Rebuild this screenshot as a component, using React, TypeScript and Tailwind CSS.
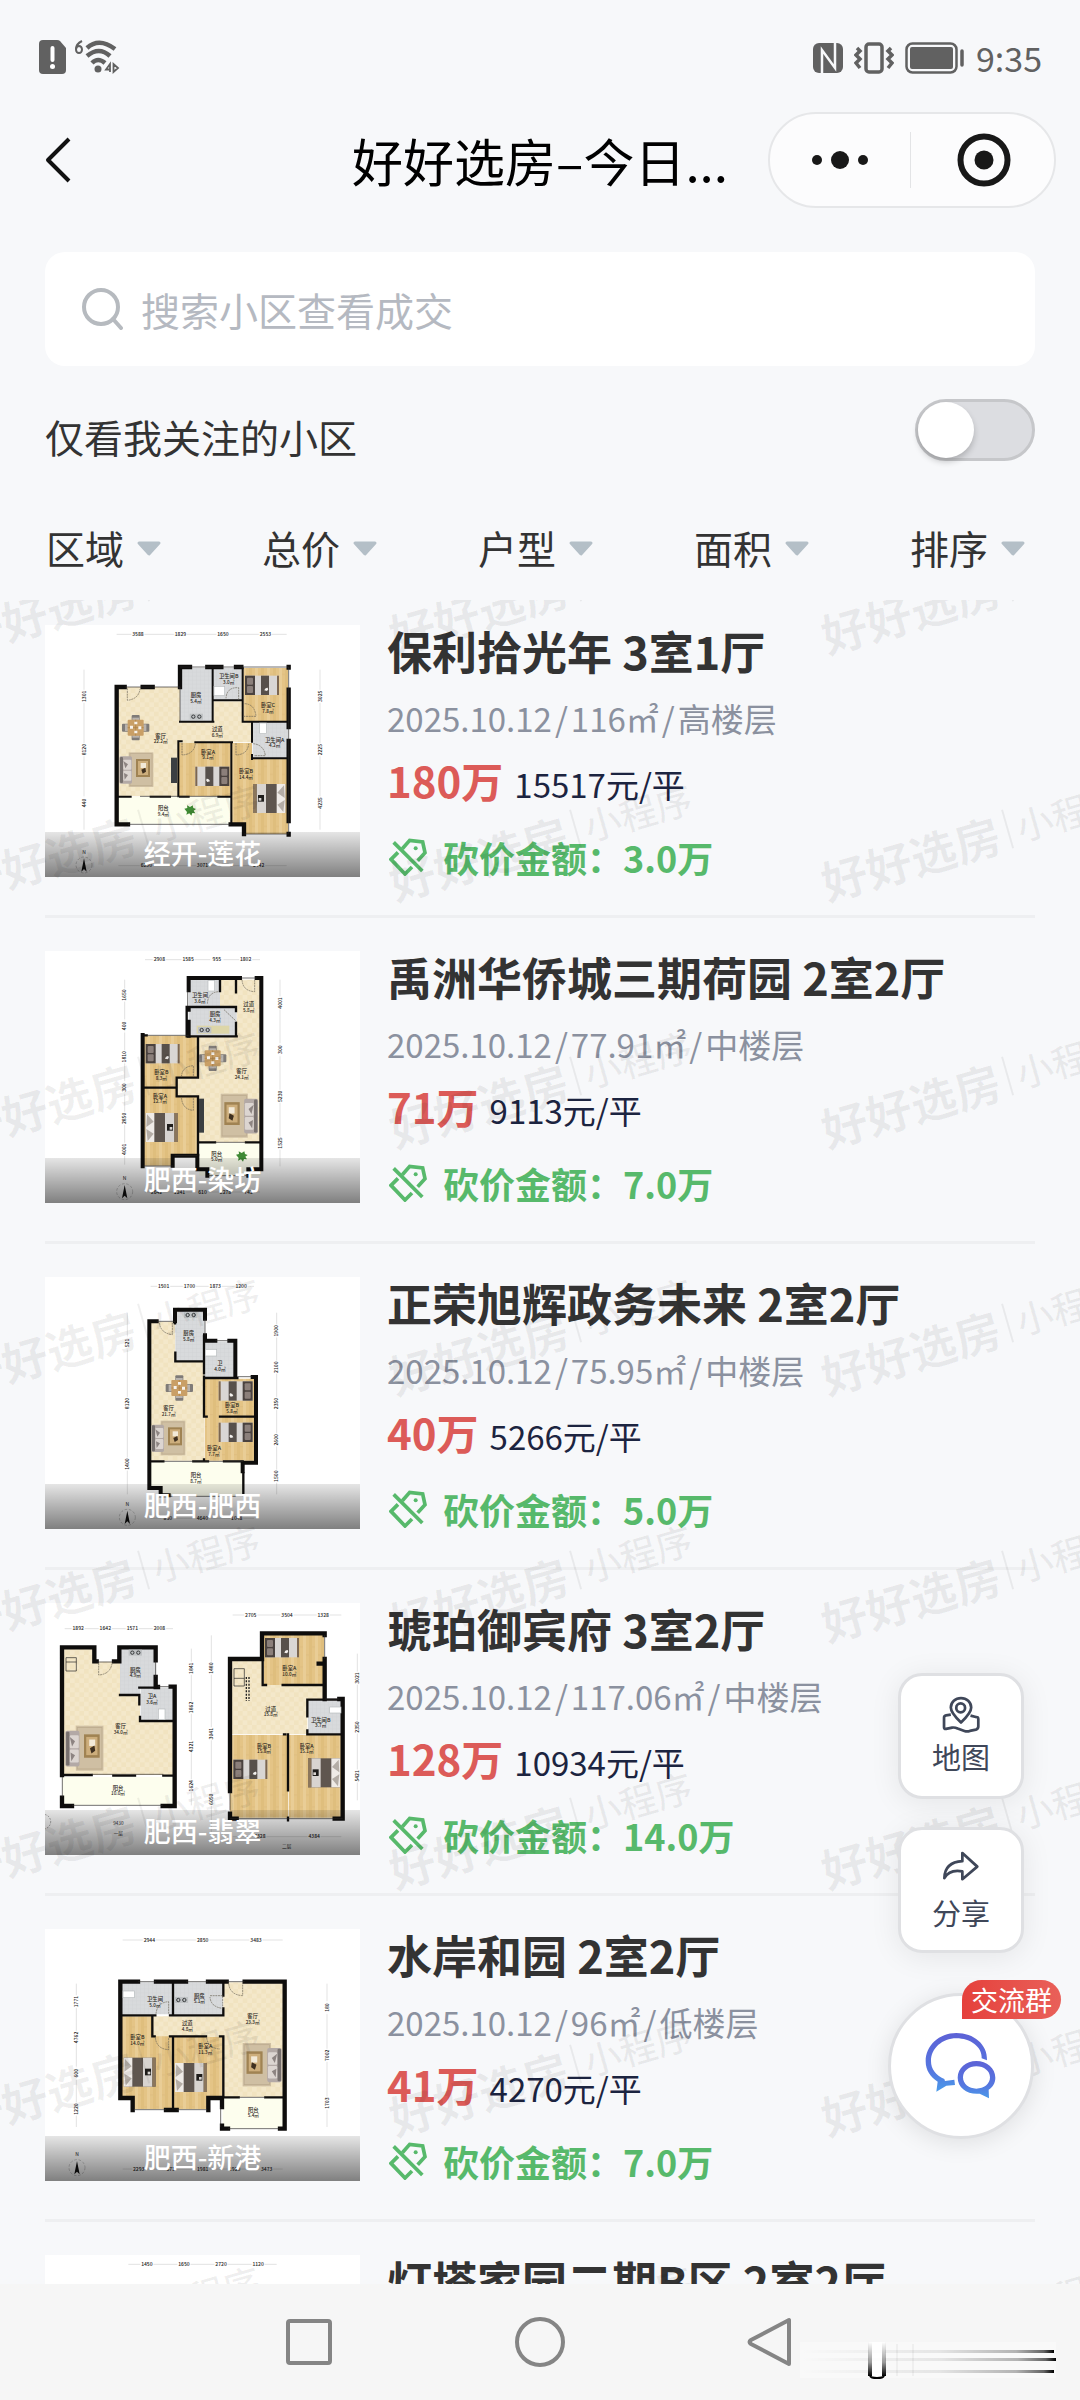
import { ReactNode, useState } from "react";

type Plan = { x: number; y: number; art: ReactNode };

const listings = [
  { name: "保利拾光年 3室1厅", date: "2025.10.12", area: "116㎡", floor: "高楼层", price: "180万", unit: "15517元/平", cut: "3.0万", place: "经开-莲花" },
  { name: "禹洲华侨城三期荷园 2室2厅", date: "2025.10.12", area: "77.91㎡", floor: "中楼层", price: "71万", unit: "9113元/平", cut: "7.0万", place: "肥西-染坊" },
  { name: "正荣旭辉政务未来 2室2厅", date: "2025.10.12", area: "75.95㎡", floor: "中楼层", price: "40万", unit: "5266元/平", cut: "5.0万", place: "肥西-肥西" },
  { name: "琥珀御宾府 3室2厅", date: "2025.10.12", area: "117.06㎡", floor: "中楼层", price: "128万", unit: "10934元/平", cut: "14.0万", place: "肥西-翡翠" },
  { name: "水岸和园 2室2厅", date: "2025.10.12", area: "96㎡", floor: "低楼层", price: "41万", unit: "4270元/平", cut: "7.0万", place: "肥西-新港" },
  { name: "灯塔家园二期B区 2室2厅", date: "2025.10.12", area: "89㎡", floor: "中楼层", price: "62万", unit: "6966元/平", cut: "4.0万", place: "肥西-桃花" },
];

const filters = ["区域", "总价", "户型", "面积", "排序"];

/* ---------- floor plan pieces ---------- */

const Floor = ({ d, kind }: { d: string; kind: "wood" | "cream" | "tile" | "deck" }) => (
  <path d={d} fill={kind === "deck" ? "#fdfeee" : `url(#${kind})`} />
);

const Wall = ({ d, w = 12 }: { d: string; w?: number }) => (
  <path d={d} fill="none" stroke="#0e0d0c" strokeWidth={w} strokeLinecap="square" />
);

const Thin = ({ d }: { d: string }) => (
  <path d={d} fill="none" stroke="#2a2927" strokeWidth="2" />
);

const Door = ({ d }: { d: string }) => (
  <path d={d} fill="none" stroke="#6b6557" strokeWidth="2" strokeDasharray="6 2" />
);

const Label = ({ x, y, name, area }: { x: number; y: number; name: string; area: string }) => (
  <text x={x} y={y} fontSize="16" fontWeight="500" textAnchor="middle" fill="#2b2722">
    {name}
    <tspan x={x} dy="17" fontSize="14">{area}</tspan>
  </text>
);

const Bed = ({ x, y, flip }: { x: number; y: number; flip?: boolean }) => (
  <g transform={flip ? `translate(${x + 102} ${y}) scale(-1 1)` : `translate(${x} ${y})`}>
    <rect width="102" height="58" fill="#d9d6d4" />
    <rect width="30" height="58" fill="#4a423f" />
    <rect x="6" y="6" width="18" height="21" rx="3" fill="#8b7f7a" />
    <rect x="6" y="31" width="18" height="21" rx="3" fill="#8b7f7a" />
    <rect x="48" width="24" height="58" fill="#57504b" />
    <rect x="96" width="6" height="58" fill="#7c6650" />
    <path d="M58 44 q2 -9 10 -8 q4 6 -2 10z" fill="#f5f2ef" />
  </g>
);

const BigBed = ({ x, y, flip }: { x: number; y: number; flip?: boolean }) => (
  <g transform={flip ? `translate(${x + 96} ${y}) scale(-1 1)` : `translate(${x} ${y})`}>
    <rect width="96" height="87" fill="#5f564f" />
    <rect width="26" height="87" fill="#efebe7" />
    <path d="M4 4 l20 22 l-22 16z M2 48 l22 14 l-18 22z" fill="#b4ada6" />
    <rect x="58" width="28" height="87" fill="#d8d4d0" />
    <rect x="64" y="33" width="18" height="20" fill="#1f1d1b" />
    <rect x="72" y="42" width="8" height="8" fill="#d8d4d0" />
    <rect x="86" width="10" height="87" fill="#8b765c" />
  </g>
);

const Dining = ({ x, y }: { x: number; y: number }) => (
  <g transform={`translate(${x} ${y})`}>
    <rect x="-12" y="-38" width="24" height="76" rx="3" fill="#7f7b78" />
    <rect x="-41" y="-12" width="82" height="24" rx="3" fill="#7f7b78" />
    <rect x="-32" y="-10" width="64" height="20" fill="#b9b3ad" />
    <rect x="-10" y="-30" width="20" height="60" fill="#b9b3ad" />
    <rect x="-24" y="-24" width="48" height="48" rx="3" fill="#c99f66" />
    <path d="M-24 0 h48 M0 -24 v48" stroke="#a97d45" strokeWidth="2" />
    <path d="M-17 -6 h9 v9 h-9z M8 -4 h9 v9 h-9z M-4 -18 h9 v8 h-9z M-4 9 h9 v8 h-9z" fill="#f7f3ec" />
  </g>
);

const Lounge = ({ x, y, flip }: { x: number; y: number; flip?: boolean }) => (
  <g transform={flip ? `translate(${x + 102} ${y}) scale(-1 1)` : `translate(${x} ${y})`}>
    <rect x="28" width="74" height="104" fill="#cfbfa3" />
    <rect x="32" y="4" width="66" height="96" fill="none" stroke="#bcab8e" strokeWidth="2" />
    <rect y="12" width="38" height="82" rx="5" fill="#b3a9a6" />
    <rect x="2" y="14" width="9" height="78" rx="3" fill="#77706e" />
    <rect x="12" y="22" width="24" height="30" rx="3" fill="#dcd5d1" />
    <rect x="12" y="55" width="24" height="30" rx="3" fill="#dcd5d1" />
    <path d="M12 26 l14 10 l-8 12z M14 62 l12 6 l-10 14z" fill="#8d8482" />
    <rect x="50" y="20" width="42" height="54" fill="#a08353" />
    <rect x="56" y="26" width="30" height="42" fill="#cdae7c" />
    <rect x="64" y="32" width="16" height="15" fill="#f3ead8" />
    <path d="M66 52 l12 -6 l2 12 l-10 6z" fill="#3f3020" />
  </g>
);

const Plant = ({ x, y }: { x: number; y: number }) => (
  <path
    transform={`translate(${x} ${y})`}
    d="M-16 -5 l9 -2 l-1 -8 l9 5 l8 -5 l2 8 l8 3 l-7 5 l5 8 l-9 -1 l-3 8 l-6 -7 l-9 4 l2 -8z"
    fill="#3f8a34"
  />
);

const Stove = ({ x, y }: { x: number; y: number }) => (
  <g transform={`translate(${x} ${y})`}>
    <rect width="40" height="18" fill="#bfc2c4" />
    <circle cx="11" cy="9" r="5" fill="none" stroke="#35383a" strokeWidth="3" />
    <circle cx="29" cy="9" r="5" fill="none" stroke="#35383a" strokeWidth="3" />
  </g>
);

const Toilet = ({ x, y, w = 34, h = 20 }: { x: number; y: number; w?: number; h?: number }) => (
  <rect x={x} y={y} width={w} height={h} fill="#ffffff" stroke="#b8bcbe" strokeWidth="2" />
);

const DimH = ({ x, y, w, marks }: { x: number; y: number; w: number; marks: string[] }) => (
  <g>
    <path d={`M${x} ${y} H${x + w}`} stroke="#c4c4c4" strokeWidth="1.5" />
    {marks.map((m, i) => {
      const cx = x + (w * (i + 0.5)) / marks.length;
      return (
        <g key={i}>
          <rect x={cx - 20} y={y - 6} width="40" height="12" fill="#ffffff" fillOpacity="0.8" />
          <text x={cx} y={y + 5} fontSize="15" fontWeight="500" textAnchor="middle" fill="#1c1c1c">{m}</text>
        </g>
      );
    })}
  </g>
);

const DimV = ({ x, y, h, marks }: { x: number; y: number; h: number; marks: string[] }) => (
  <g transform={`translate(${x} ${y + h}) rotate(-90)`}>
    <DimH x={0} y={0} w={h} marks={marks} />
  </g>
);

const North = ({ x, y }: { x: number; y: number }) => (
  <g transform={`translate(${x} ${y})`}>
    <circle r="24" fill="none" stroke="#9b9b9b" strokeWidth="1.5" strokeDasharray="8 5" />
    <path d="M0 -20 L8 20 L0 12 L-8 20z" fill="#111" />
    <text y="-34" fontSize="15" textAnchor="middle" fill="#222">N</text>
  </g>
);

const plans: Plan[] = [
  {
    x: 135,
    y: 76,
    art: (
      <>
        <DimH x={350} y={104} w={510} marks={["3588", "1829", "1650", "2553"]} />
        <DimH x={355} y={798} w={505} marks={["6230", "3071", "2442"]} />
        <DimV x={252} y={210} h={480} marks={["440", "8120", "1301"]} />
        <DimV x={960} y={210} h={480} marks={["4235", "2225", "3025"]} />
        <Floor kind="cream" d="M350 262 H540 V366 H640 V305 H730 V366 H756 V428 H696 V430 H535 V590 H350z" />
        <Floor kind="tile" d="M540 205 H638 V366 H540z M640 205 H730 V302 H640z M758 368 H864 V478 H758z" />
        <Floor kind="wood" d="M730 205 H864 V366 H730z M535 430 H692 V590 H535z M696 430 H756 V478 H864 V703 H735 V672 H696z" />
        <Floor kind="deck" d="M350 592 H692 V672 H350z" />
        <Wall d="M350 262 H374 M428 262 H458 M350 262 V674 H384 M540 262 V202 H570 M622 202 H638 M638 202 H664 M708 202 H724 M866 202 V204 M866 270 V382 M866 424 V664 M866 703 V705 M692 674 H732 V703" w={13} />
        <Wall d="M638 206 V366 M540 206 V262 M642 302 H672 M728 206 V302 M540 366 H640 M672 302 H728 V366 M732 366 H864 M756 368 V426 M756 476 H864 M756 466 V478 M535 430 V590 M535 425 H545 M586 428 H696 M694 430 V674 M350 591 H392 M452 591 H510 M540 591 H566 M655 591 H692" w={6} />
        <Thin d="M374 262 H540 M540 202 H866 V703 H732 M384 674 H692 M420 590 H660 M540 262 V366" />
        <Door d="M382 266 V302 Q416 298 420 268 M716 300 V264 Q680 262 678 296 M730 350 H768 Q764 312 732 312 M546 430 V466 Q582 464 586 432 M708 430 V466 Q744 464 746 432 M760 432 Q792 436 796 468 H762" />
        <rect x="513" y="474" width="18" height="76" fill="#3b3f42" />
        <Stove x={569} y={342} />
        <Toilet x={642} y={260} w={32} h={28} />
        <Toilet x={779} y={370} w={20} h={32} />
        <Dining x={407} y={384} />
        <Lounge x={358} y={458} />
        <Bed x={735} y={228} />
        <Bed x={586} y={501} flip />
        <BigBed x={760} y={553} flip />
        <Plant x={569} y={632} />
        <Label x={482} y={414} name="客厅" area="22.2㎡" />
        <Label x={588} y={292} name="厨房" area="5.4㎡" />
        <Label x={686} y={236} name="卫生间B" area="3.0㎡" />
        <Label x={804} y={322} name="卧室C" area="7.8㎡" />
        <Label x={652} y={394} name="过道" area="6.9㎡" />
        <Label x={824} y={426} name="卫生间A" area="4.2㎡" />
        <Label x={624} y={462} name="卧室A" area="9.1㎡" />
        <Label x={738} y={520} name="卧室B" area="14.4㎡" />
        <Label x={490} y={632} name="阳台" area="9.4㎡" />
        <North x={252} y={796} />
      </>
    ),
  },
  {
    x: 135,
    y: 64,
    art: (
      <>
        <DimH x={435} y={90} w={345} marks={["2908", "1585", "955", "1802"]} />
        <DimH x={435} y={787} w={345} marks={["2642", "1241", "610", "2278", "742"]} />
        <DimV x={374} y={150} h={555} marks={["4001", "2850", "300", "1810", "400", "1650"]} />
        <DimV x={840} y={150} h={560} marks={["1525", "5230", "300", "4001"]} />
        <Floor kind="cream" d="M596 320 H710 V235 H660 V150 H785 V638 H596 V502 H530 V446 H596z" />
        <Floor kind="tile" d="M566 150 H660 V230 H566z M566 236 H710 V318 H566z" />
        <Floor kind="wood" d="M430 318 H592 V444 H528 V472 H430z M430 475 H528 V502 H592 V676 H520 V708 H430z" />
        <Floor kind="deck" d="M598 640 H782 V738 H598z" />
        <Wall d="M566 182 V145 H720 M770 145 H784 V719 M428 316 V710 M518 708 V678 H592 V719 H622 V738 M745 719 H784 M745 719 V738 M566 240 V238 M566 276 V318" w={12} />
        <Wall d="M566 232 H708 V244 M708 280 V320 H594 V444 H530 V500 H594 V676 M660 150 V184 M708 154 V188 M428 317 H440 M430 474 H530 M566 320 H710 M598 638 H645 M738 638 H782 M560 232 V320" w={7} />
        <Thin d="M440 317 H566 M430 709 H520 M592 678 H524 M622 738 H745 M645 638 H738 M722 145 H770 M563 182 V230" />
        <Door d="M726 150 Q728 184 764 186 V150 M622 222 Q624 188 656 186 M544 442 Q546 410 580 408 V440 M544 504 Q548 540 580 542 V504 M672 240 L710 276" />
        <rect x="597" y="507" width="15" height="102" fill="#3b3f42" />
        <rect x="590" y="288" width="98" height="24" fill="#ddd6a8" />
        <Stove x={594} y={292} />
        <Toilet x={624} y={152} w={20} h={32} />
        <Dining x={638} y={386} />
        <g transform="translate(662 492) scale(1.1 1.27)">
          <Lounge x={0} y={0} flip />
        </g>
        <Bed x={437} y={343} />
        <BigBed x={437} y={550} />
        <Plant x={724} y={680} />
        <Label x={600} y={203} name="卫生间" area="3.6㎡" />
        <Label x={746} y={230} name="过道" area="5.8㎡" />
        <Label x={645} y={259} name="厨房" area="4.3㎡" />
        <Label x={484} y={434} name="卧室B" area="8.3㎡" />
        <Label x={725} y={430} name="客厅" area="24.1㎡" />
        <Label x={480} y={504} name="卧室A" area="12.7㎡" />
        <Label x={650} y={678} name="阳台" area="5.0㎡" />
        <North x={374} y={786} />
      </>
    ),
  },
  {
    x: 135,
    y: 51,
    art: (
      <>
        <DimH x={452} y={79} w={310} marks={["1501", "1700", "1873", "1200"]} />
        <DimH x={452} y={775} w={310} marks={["850", "4640", "1048"]} />
        <DimV x={382} y={158} h={545} marks={["1400", "8120", "521"]} />
        <DimV x={830} y={158} h={545} marks={["1500", "2600", "2350", "2100", "1900"]} />
        <Floor kind="cream" d="M448 185 H526 V304 H612 V602 H448z" />
        <Floor kind="tile" d="M526 150 H614 V302 H526z M614 245 H708 V352 H614z" />
        <Floor kind="wood" d="M614 356 H768 V602 H614z" />
        <Floor kind="deck" d="M452 606 H728 V708 H486 V684 H452z" />
        <Wall d="M470 184 H448 V684 H482 V706 H506 M525 184 V149 H615 V176 M615 226 V242 H646 M688 242 H706 V350 M758 351 H768 V608 H728 V634" w={12} />
        <Wall d="M525 186 V190 M526 278 V304 H612 V228 M612 306 V340 M612 354 H712 M612 350 V470 H620 M660 470 H766 M612 598 V602 M452 604 H490 M580 604 H624 M672 604 H728 M730 640 V705" w={7} />
        <Thin d="M470 184 H525 M615 176 V226 M646 242 H688 M712 350 H758 M490 604 H730 M506 709 H730" />
        <Door d="M478 188 Q482 220 517 224 V188" />
        <Stove x={552} y={156} />
        <Toilet x={616} y={268} w={34} h={20} />
        <Dining x={538} y={384} />
        <Lounge x={454} y={482} />
        <Bed x={656} y={364} flip />
        <Bed x={656} y={488} flip />
        <Label x={566} y={226} name="厨房" area="5.8㎡" />
        <Label x={660} y={316} name="卫" area="4.0㎡" />
        <Label x={506} y={450} name="客厅" area="21.7㎡" />
        <Label x={696} y={442} name="卧室B" area="5.8㎡" />
        <Label x={642} y={570} name="卧室A" area="7.7㎡" />
        <Label x={588} y={652} name="阳台" area="8.7㎡" />
        <North x={382} y={772} />
      </>
    ),
  },
  {
    x: 135,
    y: 68,
    art: (
      <>
        <DimH x={194} y={145} w={325} marks={["1892", "1642", "1571", "2008"]} />
        <DimH x={698} y={104} w={326} marks={["2705", "3504", "1328"]} />
        <DimH x={698} y={769} w={326} marks={["4328", "4384"]} />
        <DimV x={574} y={205} h={470} marks={["1624", "4321", "1862", "1841"]} />
        <DimV x={634} y={165} h={590} marks={["6050", "3041", "1480"]} />
        <DimV x={1072} y={220} h={440} marks={["5421", "2350", "3021"]} />
        <Floor kind="cream" d="M190 202 H284 V244 H360 V344 H420 V422 H522 V584 H190z M690 240 H790 V314 H970 V360 H922 V462 H690z" />
        <Floor kind="tile" d="M360 202 H468 V324 H420 V342 H360z M422 322 H520 V420 H422z M924 360 H1026 V460 H924z" />
        <Floor kind="wood" d="M792 164 H972 V314 H792z M690 464 H864 V712 H690z M866 464 H1026 V712 H866z" />
        <Floor kind="deck" d="M188 590 H520 V674 H188z" />
        <Wall d="M186 584 V201 H283 V243 H290 M342 243 H358 V201 H467 V240 M467 290 V320 H474 M512 319 H524 V677 H488 M216 677 H186 V652 M690 632 V236 H786 V159 H974 V164 M974 236 V356 M1018 356 H1028 V715 H1004 M710 715 H690 V700 M964 250 H956" w={13} />
        <Wall d="M190 584 H275 M340 586 H405 M490 586 H520 M360 344 H418 V372 M418 322 H470 M420 410 V422 H520 M788 164 V314 H798 M848 314 H974 M922 358 H1024 M922 358 V408 M922 450 V462 H1024 M864 462 V630 M852 462 H856 M864 712 V720" w={7} />
        <Thin d="M290 245 H342 M467 240 V290 M474 319 H512 M216 675 H488 M187 590 V650 M275 582 H490 M974 164 V236 M690 715 H1028 M690 636 V690 M974 356 H1018" />
        <Door d="M296 248 V284 Q330 282 336 250" />
        <path d="M198 232 h31 v40 h-31z M198 245 h31 M702 265 h31 v52 h-31z M702 294 h31" fill="none" stroke="#222" strokeWidth="2" />
        <path d="M739 290 V362 M747 290 V362" stroke="#222" strokeWidth="4" strokeDasharray="6 4" />
        <Stove x={386} y={208} />
        <Toilet x={475} y={386} w={20} h={32} />
        <Toilet x={989} y={380} w={34} h={18} />
        <g transform="translate(196 436) scale(1.12 1.3)">
          <Lounge x={0} y={0} />
        </g>
        <Bed x={795} y={173} />
        <Bed x={700} y={538} />
        <BigBed x={924} y={534} flip />
        <Label x={406} y={274} name="厨房" area="4.9㎡" />
        <Label x={456} y={354} name="卫A" area="3.6㎡" />
        <Label x={362} y={444} name="客厅" area="34.0㎡" />
        <Label x={354} y={628} name="阳台" area="10.0㎡" />
        <Label x={868} y={270} name="卧室A" area="10.0㎡" />
        <Label x={812} y={391} name="过道" area="15.8㎡" />
        <Label x={962} y={424} name="卫生间B" area="3.7㎡" />
        <Label x={792} y={502} name="卧室B" area="15.8㎡" />
        <Label x={920} y={502} name="卧室A" area="15.1㎡" />
        <text x="355" y="734" fontSize="14" textAnchor="middle" fill="#222">9430</text>
        <text x="355" y="764" fontSize="14" textAnchor="middle" fill="#222">一层</text>
        <text x="860" y="802" fontSize="14" textAnchor="middle" fill="#222">二层</text>
        <circle cx="130" cy="724" r="22" fill="none" stroke="#777" strokeWidth="2" strokeDasharray="5 4" />
      </>
    ),
  },
  {
    x: 135,
    y: 86,
    art: (
      <>
        <DimH x={368} y={119} w={480} marks={["2944", "2850", "3483"]} />
        <DimH x={368} y={806} w={480} marks={["2293", "671", "1981", "1920", "3473"]} />
        <DimV x={229} y={250} h={430} marks={["1220", "600", "4762", "1771"]} />
        <DimV x={981} y={250} h={430} marks={["1703", "7002", "180"]} />
        <Floor kind="tile" d="M362 246 H518 V342 H362z M522 246 H668 V342 H522z" />
        <Floor kind="cream" d="M670 246 H852 V590 H670 V410 H458 V348 H670z" />
        <Floor kind="wood" d="M362 348 H456 V408 H518 V626 H400 V592 H362z M522 410 H668 V592 H622 V626 H522z" />
        <Floor kind="deck" d="M668 594 H850 V684 H668z" />
        <Wall d="M414 244 H361 V593 H398 V629 M468 244 H558 M624 244 H680 M734 244 H854 V685 H840 M498 629 H530 M625 629 V593 H666 V620 M666 676 V685 H684" w={13} />
        <Wall d="M519 250 V342 M366 345 H466 M510 345 H670 V324 M670 250 V286 M457 348 V408 H464 M510 408 H618 M660 408 H670 V590 M519 410 V626 M670 591 H716 M796 591 H850" w={7} />
        <Thin d="M414 244 H468 M558 244 H624 M680 244 H734 M404 628 H498 M530 628 H620 M662 620 V680 M684 685 H840 M716 591 H796" />
        <Door d="M686 250 Q690 284 728 286 V250 M630 286 H668 V324 Q632 320 630 290 M468 340 Q472 306 506 304 V340 M466 412 Q470 446 506 448 V412 M620 412 Q624 444 660 446" />
        <Stove x={524} y={290} />
        <Toilet x={369} y={272} w={34} h={20} />
        <g transform="translate(728 428) scale(1.15 1.25)">
          <Lounge x={0} y={0} flip />
        </g>
        <BigBed x={371} y={472} />
        <BigBed x={525} y={488} />
        <Label x={465} y={303} name="卫生间" area="5.0㎡" />
        <Label x={598} y={292} name="厨房" area="5.1㎡" />
        <Label x={758} y={354} name="客厅" area="23.3㎡" />
        <Label x={562} y={374} name="过道" area="4.8㎡" />
        <Label x={412} y={416} name="卧室B" area="14.0㎡" />
        <Label x={616} y={444} name="卧室A" area="11.3㎡" />
        <Label x={760} y={634} name="阳台" area="5.4㎡" />
        <North x={231} y={802} />
      </>
    ),
  },
  {
    x: 0,
    y: 0,
    art: (
      <>
        <DimH x={250} y={28} w={445} marks={["1450", "1650", "2720", "1120"]} />
        <Floor kind="cream" d="M260 130 H680 V640 H260z" />
        <Wall d="M260 130 H680 V640 H260z" />
      </>
    ),
  },
];

const PlanDefs = () => (
  <svg className="absolute h-0 w-0" aria-hidden="true">
    <defs>
      <pattern id="wood" width="36" height="60" patternUnits="userSpaceOnUse">
        <rect width="36" height="60" fill="#e4c486" />
        <rect x="9" width="9" height="60" fill="#e9cd96" />
        <rect x="27" width="9" height="60" fill="#dfbe7d" />
        <path d="M0 20 h9 M18 44 h9" stroke="#d5b070" strokeWidth="1" />
      </pattern>
      <pattern id="cream" width="28" height="28" patternUnits="userSpaceOnUse">
        <rect width="28" height="28" fill="#f1e3c0" />
        <path d="M0 0 h14 v14 h-14z M14 14 h14 v14 h-14z" fill="#f4e8ca" />
      </pattern>
      <pattern id="tile" width="12" height="12" patternUnits="userSpaceOnUse">
        <rect width="12" height="12" fill="#d8dadc" />
        <path d="M0 0 H12 M0 0 V12" stroke="#cccfd0" strokeWidth="1.5" />
      </pattern>
    </defs>
  </svg>
);

/* ---------- icons ---------- */

const TagIcon = () => (
  <svg viewBox="30 30 114 114" className="h-[38px] w-[38px]" fill="none" stroke="#57b96b" strokeWidth="11" aria-hidden="true">
    <path d="M70 62 L92 37 L131 42 L138 74 L116 98" />
    <path d="M57 73 L36 94 L78 138 L99 117" />
    <path d="M44 43 L130 129" />
    <circle cx="110" cy="61" r="6" fill="#57b96b" stroke="none" />
  </svg>
);

const StatusBar = () => (
  <div className="flex h-20 items-end justify-between pl-[39px] pr-[38px] text-[#616161]">
    <div className="flex h-10 items-start gap-2">
      <svg viewBox="0 0 28 34" className="h-[34px] w-[28px]" aria-hidden="true">
        <path d="M4 0 H18 Q20 0 21 1 L27 8 V30 Q27 34 23 34 H4 Q0 34 0 30 V4 Q0 0 4 0z" fill="#616161" />
        <path d="M13.500 8 V20" stroke="#fff" strokeWidth="4" strokeLinecap="round" />
        <circle cx="13.500" cy="26.500" r="2.500" fill="#fff" />
      </svg>
      <svg viewBox="0 0 46 34" className="h-[34px] w-[46px]" fill="none" stroke="#616161" aria-hidden="true">
        <path d="M7 1 Q1 4 1 9" strokeWidth="2" />
        <ellipse cx="4" cy="9.500" rx="3" ry="3.500" strokeWidth="2" />
        <path d="M12 8 Q24 -3 40 9" strokeWidth="4.500" />
        <path d="M12 16 Q24 6 35 16" strokeWidth="4.500" />
        <path d="M17 23 Q23 17 30 23" strokeWidth="4.500" />
        <circle cx="23" cy="29" r="3.500" fill="#616161" stroke="none" />
        <path d="M35 32 V24 L31 29.500 H35 M38.500 24 V32 L43 28z" strokeWidth="1.800" />
      </svg>
    </div>
    <div className="flex h-11 items-center gap-[11px]">
      <svg viewBox="0 0 30 30" className="h-[30px] w-[30px]" aria-hidden="true">
        <rect width="30" height="30" rx="6" fill="#616161" />
        <path d="M9 30 V7 L22 25 V0" stroke="#f7f8fa" strokeWidth="2.500" fill="none" />
        <path d="M13 6 L19 14 V2 M12 17 V28 L18 24z" fill="#616161" />
      </svg>
      <svg viewBox="0 0 40 32" className="h-[32px] w-[40px]" fill="none" stroke="#616161" strokeWidth="3.500" aria-hidden="true">
        <rect x="12" y="2" width="16" height="28" rx="3" />
        <path d="M3 6 L6 9 L2 13 L6 17 L2 21 L6 26 M37 6 L34 9 L38 13 L34 17 L38 21 L34 26" />
      </svg>
      <svg viewBox="0 0 60 32" className="h-[32px] w-[60px]" aria-hidden="true">
        <rect x="1.500" y="1.500" width="50" height="29" rx="6" fill="none" stroke="#616161" strokeWidth="2.500" />
        <rect x="5" y="5" width="43" height="22" rx="2" fill="#616161" />
        <path d="M57 9 V23" stroke="#616161" strokeWidth="3.500" strokeLinecap="round" />
      </svg>
      <span className="text-[34px] leading-10">9:35</span>
    </div>
  </div>
);

const Header = () => (
  <header className="mt-8 flex h-24 items-center justify-between px-6">
    <div className="flex flex-1">
      <button type="button" aria-label="返回" className="pl-5">
        <svg viewBox="0 0 28 48" className="h-12 w-7" fill="none" stroke="#111" strokeWidth="4" aria-hidden="true">
          <path d="M25 3 L4 24 L25 45" strokeLinejoin="round" />
        </svg>
      </button>
    </div>
    <h1 className="text-[51px] leading-[64px] text-black">好好选房–今日...</h1>
    <div className="flex flex-1 justify-end">
      <div className="flex h-24 w-[288px] items-center rounded-full border-2 border-[#e6e7e9] bg-[#fcfcfd]">
        <button type="button" aria-label="更多" className="flex flex-1 justify-center">
          <svg viewBox="0 0 56 20" className="h-5 w-14" fill="#181818" aria-hidden="true">
            <circle cx="5" cy="10" r="5" />
            <circle cx="28" cy="10" r="9" />
            <circle cx="51" cy="10" r="5" />
          </svg>
        </button>
        <span className="h-14 w-px bg-[#e3e4e6]" />
        <button type="button" aria-label="关闭" className="flex flex-1 justify-center pl-1">
          <svg viewBox="0 0 54 54" className="h-[54px] w-[54px]" aria-hidden="true">
            <circle cx="27" cy="27" r="23.500" fill="none" stroke="#181818" strokeWidth="6" />
            <circle cx="27" cy="27" r="9.500" fill="#181818" />
          </svg>
        </button>
      </div>
    </div>
  </header>
);

const Watermark = () => (
  <div className="pointer-events-none absolute inset-0 overflow-hidden" aria-hidden="true">
    <div className="-ml-[52px] -mt-[132px] grid w-[1296px] grid-cols-3">
      {Array.from({ length: 24 }, (_, i) => (
        <div key={i} className="flex h-[247px] items-center pl-1">
          <div className="flex -rotate-[16deg] items-center whitespace-nowrap text-black/[0.06]">
            <span className="text-[46px] font-bold leading-none">好好选房</span>
            <span className="mx-2 h-10 w-0.5 bg-black/[0.06]" />
            <span className="text-[37px] font-medium leading-none">小程序</span>
          </div>
        </div>
      ))}
    </div>
  </div>
);

export default function App() {
  const [onlyMine, setOnlyMine] = useState(false);

  return (
    <div className="flex h-screen flex-col bg-[#f7f8fa] font-['Noto_Sans_CJK_SC',sans-serif] text-[#333]">
      <PlanDefs />
      <StatusBar />
      <Header />

      {/* Search */}
      <div className="px-[45px] pt-11">
        <label className="flex h-[114px] items-center gap-[18px] rounded-[20px] bg-white px-9">
          <svg viewBox="0 0 42 42" className="h-[42px] w-[42px]" fill="none" stroke="#b6babf" strokeWidth="4" aria-hidden="true">
            <circle cx="20" cy="19" r="17" />
            <path d="M32 31 L40 40" strokeLinecap="round" />
          </svg>
          <input
            type="search"
            aria-label="搜索小区"
            placeholder="搜索小区查看成交"
            className="min-w-0 flex-1 bg-transparent text-[39px] outline-none placeholder:text-[#b5b9c1]"
          />
        </label>
      </div>

      {/* Followed only */}
      <label className="flex items-center justify-between px-[45px] pt-[29px]">
        <span className="pt-3 text-[39px] leading-[58px]">仅看我关注的小区</span>
        <input
          type="checkbox"
          className="peer sr-only"
          checked={onlyMine}
          onChange={(e) => setOnlyMine(e.target.checked)}
        />
        <span className="flex h-[62px] w-[120px] rounded-full border-[3px] border-[#c6c7ca] bg-[#dcdde1] peer-checked:justify-end peer-checked:bg-green-400">
          <span className="h-14 w-14 rounded-full bg-white shadow-[0_4px_6px_rgba(0,0,0,0.2)]" />
        </span>
      </label>

      {/* Filters */}
      <div className="grid grid-cols-5 pb-[23px] pt-[52px]">
        {filters.map((f) => (
          <button type="button" key={f} className="flex items-center justify-center gap-3 text-[39px] leading-[60px]">
            {f}
            <svg viewBox="0 0 26 20" className="mr-2 h-5 w-[26px]" aria-hidden="true">
              <path d="M3 6 H23 L13 17z" fill="#b4bfc7" stroke="#b4bfc7" strokeWidth="3" strokeLinejoin="round" />
            </svg>
          </button>
        ))}
      </div>

      {/* Listings */}
      <main className="relative min-h-0 flex-1 overflow-hidden">
        <ul className="flex flex-col gap-[33px] px-[45px] pt-[25px]">
          {listings.map((l, i) => (
            <li key={l.name} className="flex gap-[27px] border-b-[3px] border-[#eeeff1] pb-[38px]">
              <div className="relative h-[252px] w-[315px] shrink-0 bg-white">
                <svg viewBox={`${plans[i].x} ${plans[i].y} 945 756`} className="h-full w-full" aria-hidden="true">
                  {plans[i].art}
                </svg>
                <div className="absolute inset-x-0 bottom-0 h-[45px] bg-gradient-to-b from-black/10 to-black/50 text-center text-[27px] font-medium leading-[42px] text-white">
                  {l.place}
                </div>
              </div>
              <div className="min-w-0 flex-1">
                <h2 className="text-[45px] font-bold leading-[52px]">{l.name}</h2>
                <p className="mt-4 flex gap-[3px] text-[33px] leading-[50px] text-[#8b919f]">
                  <span>{l.date}</span>
                  <span>/</span>
                  <span>{l.area}</span>
                  <span>/</span>
                  <span>{l.floor}</span>
                </p>
                <p className="mt-1 flex h-16 items-baseline gap-[11px] leading-[66px]">
                  <span className="text-[42px] font-bold text-[#dc5b58]">{l.price}</span>
                  <span className="text-[33px] text-[#1c2440]">{l.unit}</span>
                </p>
                <p className="mt-[26px] flex items-center gap-4 pl-0.5 text-[36px] font-bold leading-10 text-[#57b96b]">
                  <TagIcon />
                  <span>砍价金额：{l.cut}</span>
                </p>
              </div>
            </li>
          ))}
        </ul>
        <Watermark />

        {/* Floating actions */}
        <div className="absolute bottom-[145px] right-[46px] flex flex-col items-center gap-7">
          <button type="button" className="flex h-[126px] w-[126px] flex-col items-center rounded-3xl border-[3px] border-[#dfe0e3] bg-white pt-5 text-[29px] leading-[44px] text-[#3f4759] shadow-[0_4px_30px_rgba(0,0,0,0.08)]">
            <svg viewBox="430 172 112 112" className="h-[38px] w-[38px]" fill="none" stroke="#3f4759" strokeWidth="8" strokeLinejoin="round" aria-hidden="true">
              <path d="M486 250 Q456 222 456 206 A30 28 0 0 1 516 206 Q516 222 486 250z" />
              <circle cx="485" cy="207" r="13" />
              <path d="M456 227 L442 229 Q436 230 436 236 V264 Q436 270 442 269 L460 265 Q468 264 476 268 L496 275 Q504 278 512 275 L530 271 Q537 269 537 262 V240 Q537 233 530 234 L514 230" />
            </svg>
            地图
          </button>
          <button type="button" className="flex h-[126px] w-[126px] flex-col items-center rounded-3xl border-[3px] border-[#dfe0e3] bg-white pt-5 text-[29px] leading-[48px] text-[#3f4759] shadow-[0_4px_30px_rgba(0,0,0,0.08)]">
            <svg viewBox="430 628 112 112" className="h-[38px] w-[38px]" fill="none" stroke="#3f4759" strokeWidth="8" strokeLinejoin="round" aria-hidden="true">
              <path d="M490 637 L534 677 L490 714 V691 Q452 684 437 711 Q438 664 490 661z" />
            </svg>
            分享
          </button>
          <button type="button" className="relative mt-3 flex h-[146px] w-[146px] items-center justify-center rounded-full border-[3px] border-[#dfe0e3] bg-white shadow-[0_4px_24px_rgba(0,0,0,0.1)]">
            <svg viewBox="380 1185 216 204" className="h-[68px] w-[72px]" aria-hidden="true">
              <defs>
                <linearGradient id="chat" x1="0" y1="0" x2="0" y2="1">
                  <stop offset="0" stopColor="#5d62d6" />
                  <stop offset="0.65" stopColor="#5577e0" />
                  <stop offset="1" stopColor="#4a9bea" />
                </linearGradient>
              </defs>
              <g fill="url(#chat)">
                <path d="M566 1270 C568 1222 526 1188 474 1188 C422 1188 382 1226 382 1272 C382 1300 396 1320 418 1334 L414 1364 L444 1346 L470 1344 L468 1328 L440 1332 L438 1326 C412 1314 398 1296 398 1272 C398 1234 432 1204 474 1204 C516 1204 552 1230 550 1264z" />
                <path fillRule="evenodd" d="M534 1272 C565 1272 591 1294 591 1322 C591 1338 583 1350 571 1358 L572 1384 L544 1370 C508 1374 478 1352 478 1322 C478 1294 503 1272 534 1272z M534 1288 C512 1288 494 1302 494 1321 C494 1341 512 1355 534 1355 C557 1355 575 1341 575 1321 C575 1302 557 1288 534 1288z" />
              </g>
            </svg>
            <span className="absolute -right-[30px] -top-4 whitespace-nowrap rounded-full rounded-bl-none bg-gradient-to-r from-[#e5403c] to-[#e96059] px-[9px] text-[27px] leading-[39px] text-white">
              交流群
            </span>
          </button>
        </div>
      </main>

      {/* System navigation */}
      <nav className="relative flex h-[116px] shrink-0 items-center justify-center gap-[181px] bg-[#f6f6f6]">
        <button type="button" aria-label="最近任务">
          <svg viewBox="0 0 50 50" className="h-[50px] w-[50px]" fill="none" stroke="#858585" strokeWidth="4" aria-hidden="true">
            <rect x="4" y="4" width="42" height="42" rx="2" />
          </svg>
        </button>
        <button type="button" aria-label="主屏幕">
          <svg viewBox="0 0 50 50" className="h-[50px] w-[50px]" fill="none" stroke="#858585" strokeWidth="4" aria-hidden="true">
            <circle cx="25" cy="25" r="23" />
          </svg>
        </button>
        <button type="button" aria-label="后退">
          <svg viewBox="0 0 50 50" className="h-[50px] w-[50px]" fill="none" stroke="#858585" strokeWidth="4" aria-hidden="true">
            <path d="M43 3 V47 L5 27 Q2 25 5 23z" strokeLinejoin="round" />
          </svg>
        </button>
        <svg viewBox="0 0 256 38" className="pointer-events-none absolute bottom-5 right-6 h-[38px] w-[256px]" aria-hidden="true">
          <defs>
            <linearGradient id="streak">
              <stop offset="0" stopColor="#000" stopOpacity="0" />
              <stop offset="0.55" stopColor="#000" stopOpacity="0.08" />
              <stop offset="0.85" stopColor="#000" stopOpacity="0.28" />
              <stop offset="0.96" stopColor="#000" stopOpacity="0.6" />
              <stop offset="1" stopColor="#000" />
            </linearGradient>
            <linearGradient id="drop" x1="0" y1="0" x2="0" y2="1">
              <stop offset="0" stopColor="#000" stopOpacity="0" />
              <stop offset="0.6" stopColor="#000" stopOpacity="0.4" />
              <stop offset="1" stopColor="#000" />
            </linearGradient>
          </defs>
          <rect y="0" width="256" height="36" fill="#fff" fillOpacity="0.3" />
          <rect y="8" width="254" height="3" fill="url(#streak)" />
          <rect y="16" width="256" height="3" fill="url(#streak)" />
          <rect y="28" width="254" height="3" fill="url(#streak)" />
          <rect x="69" y="0" width="16" height="36" fill="#fff" fillOpacity="0.8" />
          <rect x="68" y="0" width="4" height="34" fill="url(#drop)" />
          <rect x="82" y="0" width="4" height="34" fill="url(#drop)" />
          <path d="M70 34 Q71 36 77 36 Q83 36 84 34" fill="none" stroke="#000" strokeWidth="2" />
          <path d="M97 2 V34 M113 2 V34" stroke="#000" strokeOpacity="0.08" />
        </svg>
      </nav>
    </div>
  );
}
